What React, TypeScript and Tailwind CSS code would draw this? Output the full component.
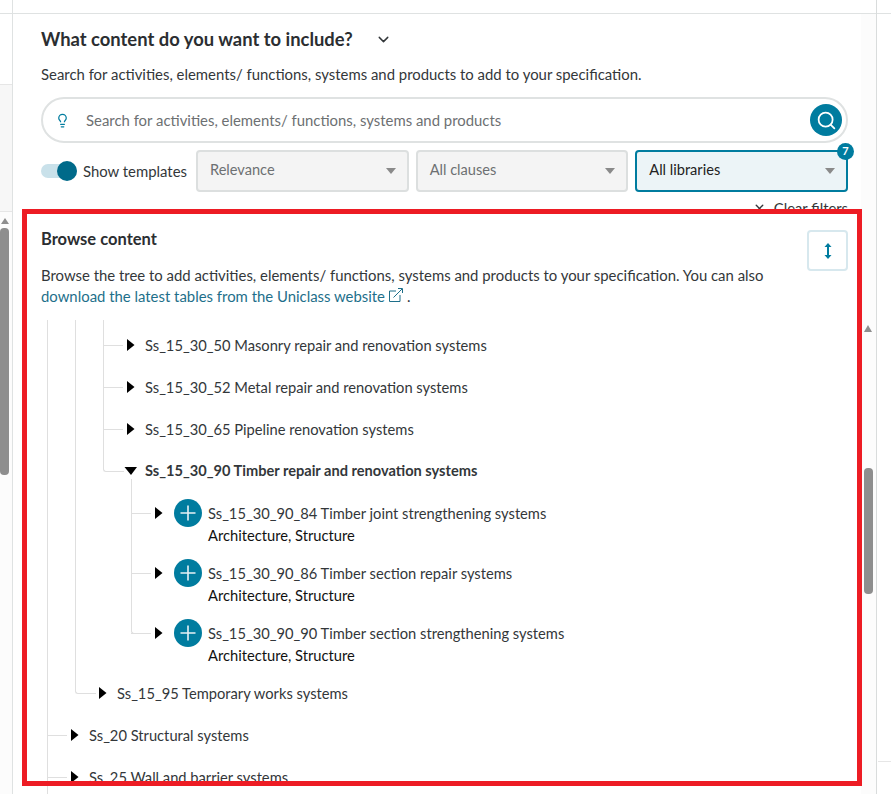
import React from "react";
import { Search, Lightbulb, ChevronDown, X } from "lucide-react";

const Tri = ({ open = false }: { open?: boolean }) => (
  <svg width="14" height="14" viewBox="0 0 14 14" className="shrink-0">
    {open ? <path d="M0.5 3 H13 L7 11 Z" fill="#000" /> : <path d="M3 1 L10.5 7 L3 13 Z" fill="#000" />}
  </svg>
);

const Sel = ({ label, active = false }: { label: string; active?: boolean }) => (
  <div className={"relative flex-1 h-[42px] rounded-[4px] border-2 flex items-center justify-between pl-[12px] pr-[11px] text-[14.6px] " + (active ? "border-[#007c9f] bg-[#ecf4f7] text-[#222]" : "border-[#dcdfdf] bg-[#f4f4f4] text-[#6d7072]")}>
    <span className="pb-[2px]">{label}</span>
    <span className="w-0 h-0 border-l-[5.5px] border-r-[5.5px] border-t-[6px] border-l-transparent border-r-transparent border-t-[#8a8a8a]" />
    {active && <span className="absolute -top-[9px] -right-[8px] w-[17px] h-[17px] rounded-full bg-[#007c9f] text-white text-[11px] font-bold flex items-center justify-center">7</span>}
  </div>
);

const Row = ({ cls, branch, label, bold = false, open = false }: { cls: string; branch?: string; label: string; bold?: boolean; open?: boolean }) => (
  <div className={"relative h-[42px] flex items-center gap-[7px] text-[#33373a] " + cls}>
    {branch && <span className={"absolute top-[21px] border-t border-[#dfdfdf] " + branch} />}
    <Tri open={open} />
    <span className={bold ? "font-bold text-[14.6px]" : ""}>{label}</span>
  </div>
);

const Leaf = ({ label }: { label: string }) => (
  <div className="relative flex h-[60px] pl-[111px] gap-[8px] pt-[2px]">
    <span className="absolute left-[90px] top-[16px] w-[20px] border-t border-[#dfdfdf]" />
    <div className="h-[28px] flex items-center"><Tri /></div>
    <div className="w-[28px] h-[28px] rounded-full bg-[#007c9f] flex items-center justify-center shrink-0">
      <svg width="18" height="18" viewBox="0 0 18 18"><path d="M9 1.5V16.5M1.5 9H16.5" stroke="#e6f1f5" strokeWidth="1.6" /></svg>
    </div>
    <div className="-ml-[2px]">
      <div className="h-[28px] leading-[28px] text-[#33373a]">{label}</div>
      <div className="leading-[16px] text-[#111]">Architecture, Structure</div>
    </div>
  </div>
);

export default function App() {
  return (
    <div className="relative w-[891px] h-[794px] overflow-hidden bg-white text-[14.9px] flex" style={{ fontFamily: "Lato, sans-serif" }}>
      <aside className="w-[13px] shrink-0 border-r border-[#dfe2e2] bg-[#fcfcfc] flex flex-col">
        <div className="h-[14px] bg-white border-b border-[#dfe2e2]" />
        <div className="h-[71px] bg-white border-b border-[#e6e6e6]" />
        <div className="h-[127px] bg-[#f7f7f7] border-b border-[#e6e6e6]" />
        <div className="flex flex-col items-start pt-[6px]">
          <span className="w-0 h-0 ml-[0.5px] border-l-[4px] border-r-[4px] border-b-[6px] border-l-transparent border-r-transparent border-b-[#8e8e8e]" />
          <span className="mt-[4px] w-[9px] h-[247px] rounded-[4px] bg-[#8e8e8e]" />
        </div>
      </aside>

      <main className="flex-1 min-w-0 flex flex-col">
        <div className="h-[14px] border-b border-[#dfe2e2] shrink-0" />
        <section className="pl-[28px] pr-[25px] h-[195px] shrink-0 overflow-hidden text-[#33373a]">
          <div className="flex items-center h-[24px] mt-[13px] gap-[22px]">
            <h2 className="text-[18.4px] font-bold leading-[24px] text-[#2b2e31]">What content do you want to include?</h2>
            <ChevronDown size={17} className="text-[#33373a]" />
          </div>
          <p className="mt-[13px] leading-[20px]">Search for activities, elements/ functions, systems and products to add to your specification.</p>
          <div className="mt-[13px] h-[46px] rounded-[23px] border-2 border-[#dfe2e2] flex items-center pl-[12px] pr-[4px]">
            <Lightbulb size={15} className="text-[#007c9f]" />
            <span className="ml-[16px] flex-1 text-[#6d7072]">Search for activities, elements/ functions, systems and products</span>
            <span className="w-[32px] h-[32px] rounded-full bg-[#007c9f] flex items-center justify-center"><Search size={21} className="text-white" strokeWidth={2} /></span>
          </div>
          <div className="mt-[7px] flex items-center">
            <div className="relative w-[36px] h-[14px] rounded-full bg-[#c9e1ea] shrink-0">
              <span className="absolute -top-[3px] right-0 w-[20px] h-[20px] rounded-full bg-[#006a8a]" />
            </div>
            <span className="ml-[6px] mr-[9px] whitespace-nowrap">Show templates</span>
            <div className="flex-1 flex gap-[7px]">
              <Sel label="Relevance" /><Sel label="All clauses" /><Sel label="All libraries" active />
            </div>
          </div>
          <div className="mt-[6px] flex justify-end items-center gap-[8px] text-[14.8px] leading-[20px]">
            <X size={13} strokeWidth={2.5} /><span>Clear filters</span>
          </div>
        </section>

        <section className="relative flex-1 min-h-0 overflow-hidden bg-white pl-[28px] pr-[25px] pt-[21px]">
          <div className="flex justify-between items-start h-[40px]">
            <h3 className="font-bold text-[#2b2e31] text-[16.5px] leading-[18px]">Browse content</h3>
            <div className="w-[41px] h-[41px] rounded-[4px] border-2 border-[#d7e8ee] flex items-center justify-center">
              <svg width="10" height="16" viewBox="0 0 10 16"><path d="M5 2V14" stroke="#007c9f" strokeWidth="2" /><path d="M5 0L8.5 4H1.5ZM5 16L1.5 12H8.5Z" fill="#007c9f" /></svg>
            </div>
          </div>
          <p className="mt-[-5px] leading-[21px] text-[#33373a]">Browse the tree to add activities, elements/ functions, systems and products to your specification. You can also<br />
            <span className="text-[#1e6f8a]">download the latest tables from the Uniclass website</span>
            <svg width="15" height="15" viewBox="0 0 15 15" fill="none" stroke="#1e6f8a" strokeWidth="1" className="inline ml-[3px] mr-[4px] align-[-1px]">
              <path d="M8 3H1.5V13.5H12V7" /><path d="M5.5 9.5L14 1M10 0.5H14.5V5" />
            </svg>.
          </p>
          <div className="relative mt-[13px] text-[14.7px]">
            <span className="absolute left-[6px] top-0 bottom-0 border-l border-[#dfdfdf]" />
            <span className="absolute left-[34px] top-0 h-[374px] w-[21px] border-l border-b border-[#dfdfdf] rounded-bl-[3px]" />
            <span className="absolute left-[62px] top-0 h-[152px] w-[21px] border-l border-b border-[#dfdfdf] rounded-bl-[3px]" />
            <span className="absolute left-[90px] top-[159px] h-[155px] w-[20px] border-l border-b border-[#dfdfdf] rounded-bl-[3px]" />
            <div className="h-[4px]" />
            <Row cls="pl-[83px]" branch="left-[62px] w-[20px]" label="Ss_15_30_50 Masonry repair and renovation systems" />
            <Row cls="pl-[83px]" branch="left-[62px] w-[20px]" label="Ss_15_30_52 Metal repair and renovation systems" />
            <Row cls="pl-[83px]" branch="left-[62px] w-[20px]" label="Ss_15_30_65 Pipeline renovation systems" />
            <Row cls="pl-[83px]" label="Ss_15_30_90 Timber repair and renovation systems" bold open />
            <div className="h-[5px]" />
            <Leaf label="Ss_15_30_90_84 Timber joint strengthening systems" />
            <Leaf label="Ss_15_30_90_86 Timber section repair systems" />
            <Leaf label="Ss_15_30_90_90 Timber section strengthening systems" />
            <Row cls="pl-[55px] -mt-[5px]" label="Ss_15_95 Temporary works systems" />
            <Row cls="pl-[27px]" branch="left-[6px] w-[20px]" label="Ss_20 Structural systems" />
            <Row cls="pl-[27px]" branch="left-[6px] w-[20px]" label="Ss_25 Wall and barrier systems" />
          </div>
        </section>
      </main>

      <aside className="w-[15px] shrink-0 flex flex-col bg-[#fcfcfc] -ml-[12px] relative">
        <div className="h-[14px] bg-white border-b border-[#dfe2e2]" />
        <div className="flex-1 flex flex-col items-start pl-[3px]">
          <span className="mt-[311px] w-0 h-0 border-l-[4.5px] border-r-[4.5px] border-b-[7px] border-l-transparent border-r-transparent border-b-[#8e8e8e]" />
          <span className="mt-[136px] w-[9px] h-[126px] rounded-[4px] bg-[#8e8e8e]" />
        </div>
      </aside>
      <aside className="w-[15px] shrink-0 border-l border-[#d9dcdc] flex flex-col">
        <div className="h-[14px] border-b border-[#dfe2e2]" />
        <div className="h-[747px]" />
        <div className="border-t border-[#e6e6e6] ml-[1px]" />
      </aside>

      <div className="absolute left-[22px] top-[209px] w-[840px] h-[577px] border-[5px] border-[#ed1c24] pointer-events-none" />
    </div>
  );
}
